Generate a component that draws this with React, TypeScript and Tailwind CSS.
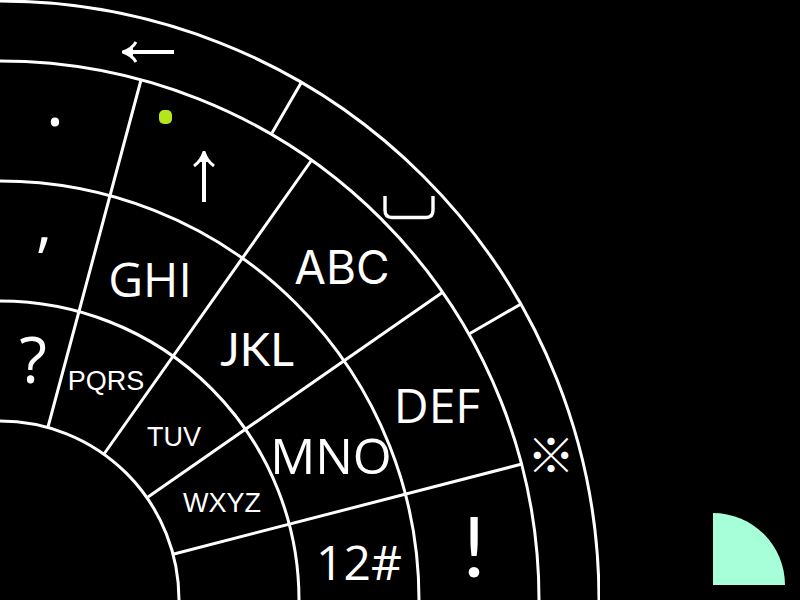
import React from "react";

type Key = { name: string; label: React.ReactNode; className: string };

const humanist = "font-['Open_Sans','Noto_Sans',sans-serif]";
const compact = "font-['Liberation_Sans',Arial,sans-serif] text-[27px]";

const ArrowLeft = () => (
  <svg width="52" height="22" viewBox="0 0 52 22" fill="none" stroke="white" aria-hidden="true">
    <path d="M3 11H52" strokeWidth="4" />
    <path d="M14 1Q10 8 1 11Q10 14 14 21" strokeWidth="3" />
    <path d="M1 11L11 7V15Z" fill="white" stroke="none" />
  </svg>
);

const ArrowUp = () => (
  <svg width="22" height="52" viewBox="0 0 22 52" fill="none" stroke="white" aria-hidden="true">
    <path d="M11 3V51" strokeWidth="4" />
    <path d="M1 15Q8 10 11 1Q14 10 21 15" strokeWidth="3" />
    <path d="M11 0L7 11H15Z" fill="white" stroke="none" />
  </svg>
);

const Space = () => (
  <svg width="52" height="24" viewBox="0 0 52 24" fill="none" stroke="white" aria-hidden="true">
    <path d="M2 0V14Q2 21.5 9 21.5H43Q50 21.5 50 14V0" strokeWidth="3.4" />
  </svg>
);

const keys: Key[] = [
  { name: "Backspace", label: <ArrowLeft />, className: "left-[148px] top-[52px]" },
  { name: "Shift", label: <ArrowUp />, className: "left-[204px] top-[177px]" },
  { name: "Space", label: <Space />, className: "left-[409px] top-[208px]" },
  { name: "Symbols", label: "※", className: "left-[551px] top-[452px] font-['Noto_Sans_CJK_JP',sans-serif] text-[48px]" },
  { name: "Period", label: ".", className: `left-[55px] top-[98px] ${humanist} text-[72px]` },
  { name: "Comma", label: ",", className: `left-[44px] top-[221px] ${humanist} text-[64px]` },
  { name: "Question mark", label: "?", className: `left-[33px] top-[359px] ${humanist} text-[64px]` },
  { name: "Exclamation mark", label: "!", className: "left-[474px] top-[545px] font-['Lato',sans-serif] text-[84px]" },
  { name: "ABC", label: "ABC", className: "left-[342px] top-[267px] font-['Inter',sans-serif] text-[46px]" },
  { name: "DEF", label: "DEF", className: `left-[437px] top-[405px] ${humanist} text-[48px]` },
  { name: "GHI", label: "GHI", className: `left-[150px] top-[279px] ${humanist} text-[48px]` },
  { name: "JKL", label: "JKL", className: "left-[257px] top-[349px] font-['Lato',sans-serif] text-[46px]" },
  { name: "MNO", label: "MNO", className: `left-[331px] top-[455px] ${humanist} text-[50px]` },
  { name: "12#", label: "12#", className: `left-[359px] top-[562px] ${humanist} text-[48px]` },
  { name: "PQRS", label: "PQRS", className: `left-[106px] top-[381px] ${compact}` },
  { name: "TUV", label: "TUV", className: `left-[174px] top-[437px] ${compact}` },
  { name: "WXYZ", label: "WXYZ", className: `left-[222px] top-[503px] ${compact}` },
];

function DialLines() {
  return (
    <svg width="600" height="600" viewBox="0 0 600 600" fill="none" stroke="white" strokeWidth="3" aria-hidden="true">
      {[179, 299, 419, 539, 599].map((r) => (
        <circle key={r} cx="0" cy="600" r={r} />
      ))}
      <path d="M141 80L48 427M311 161L104 454M443 292L148 497M522 464L174 554" />
      <path d="M301 83L272 133M521 304L469 334" />
    </svg>
  );
}

export default function App() {
  return (
    <main className="flex min-h-screen items-end justify-between overflow-hidden bg-black text-white">
      <div className="relative shrink-0">
        <DialLines />
        <span className="absolute left-[159px] top-[110px] h-3.5 w-[13px] rounded-[5px] bg-[#b5e61d]" />
        {keys.map((key) => (
          <button
            key={key.name}
            type="button"
            aria-label={key.name}
            className={`absolute -translate-x-1/2 -translate-y-1/2 leading-none whitespace-nowrap ${key.className}`}
          >
            {key.label}
          </button>
        ))}
      </div>
      <div className="mr-[15px] mb-[15px] size-[72px] shrink-0 rounded-tr-full bg-[#a6ffd8]" />
    </main>
  );
}
